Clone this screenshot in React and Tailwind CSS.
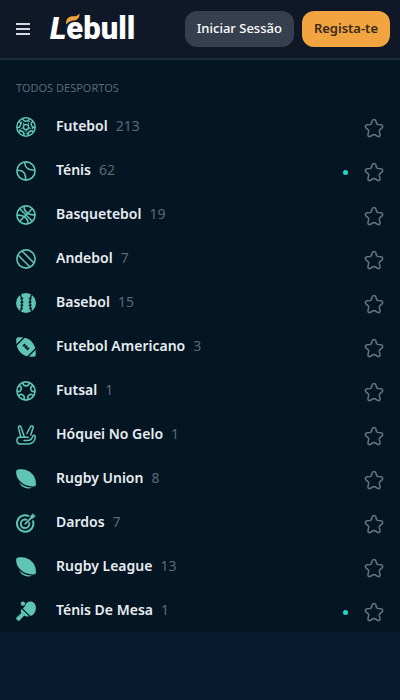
import { useState } from "react";

const STAR =
  "M11 1.6c.9 0 1.6.5 1.9 1.4l1 3c.2.7.8 1.1 1.5 1.2l3.2.3c2 .2 2.6 2.1 1.2 3.4l-2.4 2.1c-.5.5-.7 1.1-.6 1.8l.8 3.2c.5 1.9-1.1 3.1-2.8 2.1l-2.7-1.7c-.7-.4-1.5-.4-2.2 0l-2.7 1.7c-1.7 1-3.3-.2-2.8-2.1l.8-3.2c.1-.7-.1-1.3-.6-1.8L2.2 10.9C.8 9.6 1.4 7.7 3.4 7.5l3.2-.3c.7-.1 1.3-.5 1.5-1.2l1-3c.3-.9 1-1.4 1.9-1.4z";

const panels = [0, 72, 144, 216, 288];

const icons = {
  futebol: (
    <g fill="none" stroke="currentColor" strokeWidth="1.5">
      <circle cx="10" cy="10" r="9.2" />
      <circle cx="10" cy="10" r="2.6" />
      {panels.map((a) => (
        <g key={a} transform={`rotate(${a} 10 10)`}>
          <path d="M6.9 1.5c.2 2 1.300 2.800 3.100 2.800s2.900-.8 3.100-2.800" />
          <path d="M12.100 3.900 14 4.600" strokeWidth="1.200" />
          <path d="M10 12.600v2.400" strokeWidth="1.100" />
        </g>
      ))}
    </g>
  ),
  tenis: (
    <g fill="none" stroke="currentColor" strokeWidth="1.6">
      <circle cx="10" cy="10" r="9.1" />
      <path d="M8.6 1.2c.2 2.9 1 4.8 2.8 6.2 1.9 1.5 4.5 1.9 7.4 1.4" />
      <path d="M1.2 9.2c3.4-.1 5.8.9 7.2 3 1.2 1.8 1.5 4.1 1.2 6.8" />
    </g>
  ),
  basquetebol: (
    <g fill="none" stroke="currentColor" strokeWidth="1.6">
      <circle cx="10" cy="10" r="9.1" />
      <path d="m3.5 3.5 13 13M16.5 3.5l-13 13" />
      <path d="M8 1c-.2 4.8 3.2 9.2 11 8.8" />
      <path d="M1 10.2c7.8-.4 11.2 4 11 8.8" />
    </g>
  ),
  andebol: (
    <g fill="none" stroke="currentColor" strokeWidth="1.6">
      <circle cx="10" cy="10" r="9.1" />
      <path d="m6 2 12 12M2 6l12 12" />
    </g>
  ),
  basebol: (
    <g>
      <circle cx="10" cy="10" r="10" fill="currentColor" />
      <g fill="none" stroke="#041523" strokeWidth="1.3">
        <path d="M4.500 1.500c2 5.500 2 11.500 0 17M15.500 1.500c-2 5.500-2 11.500 0 17" />
        <path d="m4.500 6 2.800-1M4.500 9h2.800M4.500 12l2.800.6M4.300 15l2.500.9M15.500 6l-2.800-1M15.500 9h-2.800M15.500 12l-2.800.6M15.700 15l-2.500.9" />
      </g>
    </g>
  ),
  americano: (
    <g>
      <path
        d="M1.500.4C6.500-.4 12 .5 15.600 4.400c3.500 3.700 4.700 9 4 14.100-.1.600-.4 1-1 1.100-5 .8-10.500-.1-14.200-4C.9 11.900-.3 6.600.4 1.500c.1-.6.5-1 1.100-1.100z"
        fill="currentColor"
      />
      <path
        d="M-.5 9 9-.5M11 20.500 20.500 11M7.500 7.500l5 5M6.900 9.300l2.400-2.400M8.800 11.200l2.400-2.400M10.700 13.100l2.400-2.400"
        fill="none"
        stroke="#041523"
        strokeWidth="1.4"
      />
    </g>
  ),
  futsal: (
    <g fill="none" stroke="currentColor" strokeWidth="1.6">
      <circle cx="10" cy="10" r="9.1" />
      {panels.map((a) => (
        <path key={a} d="M6.800 1.700c.2 2.200 1.300 3.200 3.200 3.200s3-1 3.200-3.200" transform={`rotate(${a} 10 10)`} />
      ))}
    </g>
  ),
  hoquei: (
    <g fill="none" stroke="currentColor" strokeWidth="1.5" strokeLinejoin="round" strokeLinecap="round">
      <path d="M8.300 11.800 5 1.900C4.500.5 2.100.9 2.500 2.700l2.300 9.300" />
      <path d="m10.800 8.500 3.700-6.800c.8-1.500 3.200-.6 2.600 1.100L14.800 10" />
      <path d="M12.300 12.200H3.600c-3.600 0-3.800 6.900.9 6.900h7.300c4.700 0 7.600-2.900 7.300-7.500-.1-1.700-1.800-1.700-2.400-.3-.8 2.800-2.200 4.300-5.200 4.300H8" />
    </g>
  ),
  rugby: (
    <g fill="currentColor">
      <path d="M2 .6C7.500-.4 13 1.200 16.500 5.200c2.600 3 3.700 6.500 3.400 10.200-.1 1.300-.7 1.900-1.900 2-5 .4-10-1.200-13.600-4.800C1.400 9.600-.1 6 .2 2.500.3 1.300.9.800 2 .6z" />
      <path d="M3 13.300c3.700 3.500 8.200 5.200 13.200 5.300C11.200 20.900 5.500 18.500 3 13.300z" />
    </g>
  ),
  dardos: (
    <g fill="none" stroke="currentColor" strokeLinecap="round">
      <path d="M12.400 2.900A8.200 8.200 0 1 0 17.100 8.300" strokeWidth="2" />
      <path d="M10.500 6.700A4.300 4.300 0 1 0 13.300 10" strokeWidth="1.900" />
      <path d="m9.200 10.800 7-7" strokeWidth="1.700" />
      <path d="M14.700 5.300V3l2.500-2.500.4 1.900 1.900.4L17 5.300z" fill="currentColor" strokeWidth=".6" strokeLinejoin="round" />
    </g>
  ),
  mesa: (
    <g fill="currentColor">
      <circle cx="6.900" cy="2.600" r="2.200" />
      <path d="M10.200 2.300C12.800-.2 16.300-.1 18.300 2.300c2.700 3.200 1.900 8.300-1.300 11.400-.9.800-1.800 1.200-2.900 1L6.800 7.400c1.600-.9 2.400-2.900 3.400-5.100z" />
      <path d="M5.700 8 13 15.300c-1.700.6-3.400.3-4.700-.7L3.600 19.500c-.5.600-1.300.6-1.900 0L.5 18.300c-.6-.6-.6-1.300 0-1.900L5.400 12c-.8-1.200-.7-2.700.3-4z" />
    </g>
  ),
};

const sports = [
  { name: "Futebol", count: 213, icon: "futebol" },
  { name: "Ténis", count: 62, icon: "tenis", live: true },
  { name: "Basquetebol", count: 19, icon: "basquetebol" },
  { name: "Andebol", count: 7, icon: "andebol" },
  { name: "Basebol", count: 15, icon: "basebol" },
  { name: "Futebol Americano", count: 3, icon: "americano" },
  { name: "Futsal", count: 1, icon: "futsal" },
  { name: "Hóquei No Gelo", count: 1, icon: "hoquei" },
  { name: "Rugby Union", count: 8, icon: "rugby" },
  { name: "Dardos", count: 7, icon: "dardos" },
  { name: "Rugby League", count: 13, icon: "rugby" },
  { name: "Ténis De Mesa", count: 1, icon: "mesa", live: true },
];

function Logo() {
  return (
    <a
      href="#"
      aria-label="Lébull"
      className="relative ml-5 flex font-['Roboto',sans-serif] text-[31px] leading-8 font-black text-white"
    >
      <span className="italic">L</span>
      <span>ebull</span>
      <svg className="absolute top-0 left-4 h-3 w-3.5" viewBox="0 0 14 12" aria-hidden="true">
        <path d="M0 11.5C-.3 6 2.5 3.300 7 3.300c3 0 5-.6 6.500-2.800.3 4-2 6.500-5.500 7C5.500 7.800 2.500 8.500 0 11.500z" fill="#f0a03c" />
      </svg>
    </a>
  );
}

function Header() {
  return (
    <header className="flex h-15 items-center border-b-2 border-[#1b2b3a] bg-[#101827] pr-2.5 pl-4">
      <button type="button" aria-label="Menu" className="flex w-3.5 flex-col gap-[3px]">
        <span className="h-0.5 w-full bg-[#d5dae0]" />
        <span className="h-0.5 w-full bg-[#d5dae0]" />
        <span className="h-0.5 w-full bg-[#d5dae0]" />
      </button>
      <Logo />
      <div className="ml-auto flex gap-2 text-[13px] font-medium whitespace-nowrap">
        <button type="button" className="h-9 rounded-xl bg-[#363f4d] px-3 text-white">
          Iniciar Sessão
        </button>
        <button type="button" className="h-9 rounded-xl bg-[#f1a440] px-3 font-semibold text-[#3a2a1a]">
          Regista-te
        </button>
      </div>
    </header>
  );
}

function SportRow({ sport, favorite, onToggle }) {
  return (
    <li className="flex h-11 items-center px-4">
      <a href="#" className="flex flex-1 items-center gap-5">
        <svg className="mt-0.5 size-5 text-[#5fc4b4]" viewBox="0 0 20 20" aria-hidden="true">
          {icons[sport.icon]}
        </svg>
        <span className="flex gap-2 text-sm leading-5 font-semibold text-[#e8edf1]">
          {sport.name}
          <span className="font-normal text-[#5d6974]">{sport.count}</span>
        </span>
      </a>
      {sport.live && <span className="mt-1 mr-4 size-[5px] rounded-full bg-[#1fdcc4]" />}
      <button type="button" aria-label={`Favorito ${sport.name}`} aria-pressed={favorite} onClick={onToggle} className="mt-1">
        <svg className="size-5 text-[#66727e]" viewBox="0 0 22 22" fill={favorite ? "currentColor" : "none"} stroke="currentColor" strokeWidth="1.7">
          <path d={STAR} />
        </svg>
      </button>
    </li>
  );
}

export default function App() {
  const [favorites, setFavorites] = useState([]);

  const toggleFavorite = (name) => {
    setFavorites((prev) => (prev.includes(name) ? prev.filter((n) => n !== name) : [...prev, name]));
  };

  return (
    <div className="min-h-screen bg-[#081c30] font-['Noto_Sans',sans-serif]">
      <Header />
      <main className="bg-[#041523]">
        <h2 className="px-4 pt-5 pb-2 text-[11px] leading-4 text-[#5d6974]">TODOS DESPORTOS</h2>
        <ul>
          {sports.map((sport) => (
            <SportRow
              key={sport.name}
              sport={sport}
              favorite={favorites.includes(sport.name)}
              onToggle={() => toggleFavorite(sport.name)}
            />
          ))}
        </ul>
      </main>
    </div>
  );
}
